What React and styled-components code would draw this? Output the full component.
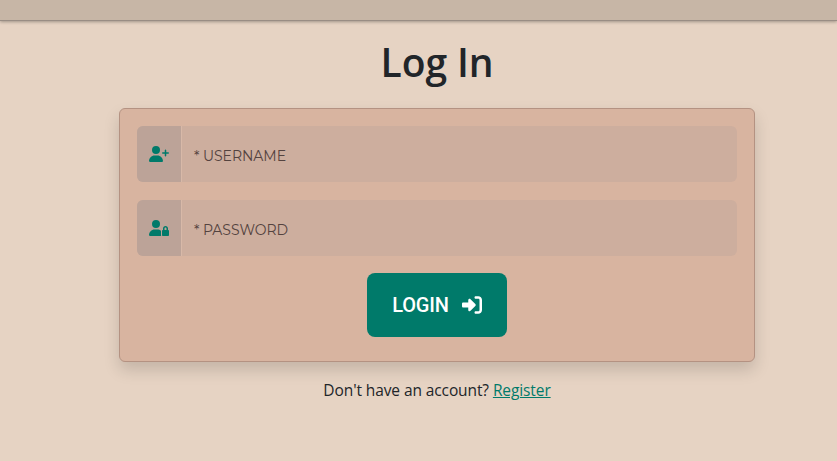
import React from "react";
import styled, { createGlobalStyle } from "styled-components";
import { FaUserPlus, FaUserLock, FaRightToBracket } from "react-icons/fa6";

const GlobalStyle = createGlobalStyle`
  * { box-sizing: border-box; }
  body {
    margin: 0;
    background: #e6d3c3;
    color: #212529;
    font-family: "Segoe UI", "Open Sans", sans-serif;
    font-size: 16px;
    overflow: hidden;
  }
`;

const Page = styled.div`
  min-height: 461px;
  display: flex;
  flex-direction: column;
`;

const TopBar = styled.header`
  height: 21px;
  background: #c7b6a6;
  border-bottom: 1px solid #998d84;
  box-shadow: 0 1px 3px rgba(0, 0, 0, 0.3);
`;

const Main = styled.main`
  width: 636px;
  margin-left: 119px;
  display: flex;
  flex-direction: column;
  align-items: center;
`;

const Title = styled.h1`
  margin: 17px 0 22px;
  font-size: 39px;
  font-weight: 600;
  line-height: 48px;
  letter-spacing: -0.1px;
`;

const Card = styled.form`
  width: 636px;
  height: 254px;
  padding: 17px;
  display: flex;
  flex-direction: column;
  align-items: center;
  background: #d8b4a0;
  border: 1px solid #b49282;
  border-radius: 6px;
  box-shadow: 0 8px 16px rgba(0, 0, 0, 0.15);
`;

const Field = styled.label`
  width: 600px;
  height: 56px;
  margin-bottom: 18px;
  display: flex;
  border-radius: 6px;
  overflow: hidden;
  background: #cdae9e;

  & + & {
    margin-bottom: 17px;
  }
`;

const FieldIcon = styled.span`
  width: 45px;
  display: flex;
  align-items: center;
  padding-left: 12px;
  background: #bca398;
  border-right: 1px solid #d8b9a8;
  color: #007a6a;

  svg {
    width: 20px;
    height: 16px;
  }
`;

const FieldLabel = styled.span`
  padding: 3px 0 0 12px;
  line-height: 54px;
  font-family: Montserrat, "Inter", sans-serif;
  font-size: 14px;
  font-weight: 400;
  letter-spacing: -0.04px;
  white-space: pre;
  color: #54433f;
`;

const LoginButton = styled.button`
  width: 140px;
  height: 64px;
  padding: 0 0 0 25px;
  display: flex;
  align-items: center;
  gap: 13px;
  border: 0;
  border-radius: 8px;
  background: #007a6a;
  color: #fff;
  font-family: Roboto, sans-serif;
  font-size: 20px;
  font-weight: 500;

  svg {
    width: 20px;
    height: 20px;
    flex: none;
  }
`;

const LoginText = styled.span`
  width: 57px;
  letter-spacing: -0.2px;
  white-space: nowrap;
`;

const Prompt = styled.p`
  margin: 16px 0 0;
  line-height: 24px;
  font-size: 15.5px;
  white-space: nowrap;
  letter-spacing: -0.1px;
`;

const RegisterLink = styled.a`
  color: #007a6a;
  text-decoration: underline;
`;

export default function App() {
  return (
    <Page>
      <GlobalStyle />
      <TopBar />
      <Main>
        <Title>Log In</Title>
        <Card>
          <Field>
            <FieldIcon><FaUserPlus /></FieldIcon>
            <FieldLabel>* USERNAME</FieldLabel>
          </Field>
          <Field>
            <FieldIcon><FaUserLock /></FieldIcon>
            <FieldLabel>* PASSWORD</FieldLabel>
          </Field>
          <LoginButton type="button">
            <LoginText>LOGIN</LoginText>
            <FaRightToBracket />
          </LoginButton>
        </Card>
        <Prompt>
          Don't have an account? <RegisterLink href="#">Register</RegisterLink>
        </Prompt>
      </Main>
    </Page>
  );
}
